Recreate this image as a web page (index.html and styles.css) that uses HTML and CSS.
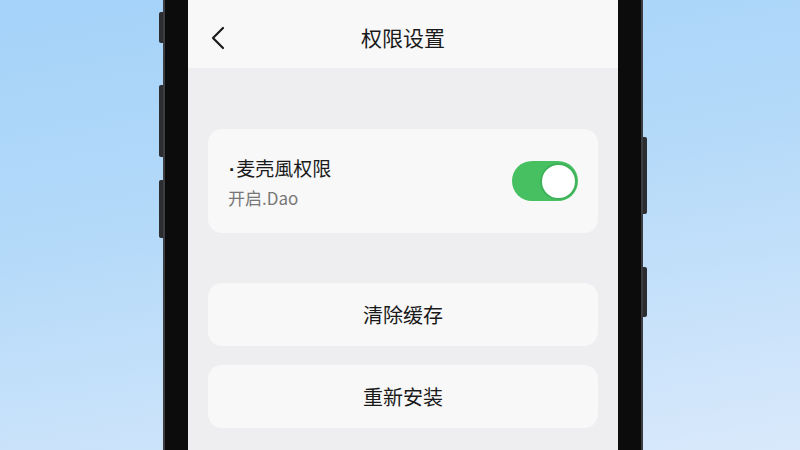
FILE: index.html
```html
<!DOCTYPE html>
<html lang="zh">
<head>
<meta charset="utf-8">
<title>权限设置</title>
<link rel="stylesheet" href="styles.css">
</head>
<body>
<div class="stage">
  <div class="keys keys-left">
    <span class="key key-a"></span>
    <span class="key key-b"></span>
    <span class="key key-c"></span>
  </div>
  <div class="phone">
    <div class="screen">
      <header class="header">
        <span class="back">
          <svg width="14" height="24" viewBox="0 0 14 24"><path d="M12 2 L2 12 L12 22" fill="none" stroke="#1a1a1a" stroke-width="2.2" stroke-linecap="round" stroke-linejoin="round"/></svg>
        </span>
        <h1 class="title">权限设置</h1>
        <span></span>
      </header>
      <main class="content">
        <section class="card card-perm">
          <div class="perm-text">
            <div class="perm-title"><span class="dot">·</span>麦壳風权限</div>
            <div class="perm-sub">开启.Dao</div>
          </div>
          <div class="toggle"><span class="knob"></span></div>
        </section>
        <section class="card card-action card-clear">清除缓存</section>
        <section class="card card-action">重新安装</section>
      </main>
    </div>
  </div>
  <div class="keys keys-right">
    <span class="key key-d"></span>
    <span class="key key-e"></span>
  </div>
</div>
</body>
</html>
```
FILE: styles.css
```css
* { box-sizing: border-box; }
html, body { margin: 0; padding: 0; }
body {
  width: 800px;
  height: 450px;
  overflow: hidden;
  font-family: "Noto Sans CJK SC", "Noto Sans", sans-serif;
}
.stage {
  display: flex;
  height: 450px;
  padding-left: 159px;
  background: linear-gradient(170deg, #a4d2f9 0%, #b5daf9 45%, #d9e9fb 100%);
}
.keys {
  width: 4px;
  display: flex;
  flex-direction: column;
}
.key {
  display: block;
  width: 4px;
  background: #2b2d30;
}
.keys-left .key { border-radius: 2px 0 0 2px; }
.keys-right .key { border-radius: 0 2px 2px 0; }
.key-a { margin-top: 12px; height: 31px; }
.key-b { margin-top: 42px; height: 72px; }
.key-c { margin-top: 23px; height: 58px; }
.key-d { margin-top: 137px; height: 77px; }
.key-e { margin-top: 53px; height: 50px; }
.phone {
  width: 480px;
  height: 450px;
  background: #0c0c0d;
  border-left: 2px solid #3b3d40;
  border-right: 2px solid #3b3d40;
  padding: 0 23px;
  display: flex;
}
.screen {
  flex: 1;
  background: #eeeef0;
  display: flex;
  flex-direction: column;
}
.header {
  height: 68px;
  background: #f8f8f8;
  display: grid;
  grid-template-columns: 1fr auto 1fr;
  align-items: center;
}
.back { display: flex; align-items: center; height: 24px; padding-left: 23px; margin-top: 8px; }
.title {
  margin: 0;
  font-size: 21px;
  font-weight: 400;
  color: #1a1a1a;
  line-height: 1;
  padding-top: 6px;
}
.content {
  display: flex;
  flex-direction: column;
  padding: 61px 20px 0;
}
.card {
  background: #f8f8f8;
  border-radius: 14px;
}
.card-perm {
  height: 104px;
  display: flex;
  align-items: center;
  justify-content: space-between;
  padding: 0 20px 0 20px;
}
.perm-text { display: flex; flex-direction: column; padding-top: 3px; }
.perm-title {
  font-size: 19px;
  color: #1a1a1a;
  line-height: 28px;
}
.dot {
  font-family: "Liberation Sans", sans-serif;
  font-weight: 700;
  margin-left: 1px;
  margin-right: 1px;
}
.perm-sub {
  font-size: 17px;
  color: #777;
  line-height: 28px;
}
.toggle {
  width: 66px;
  height: 40px;
  border-radius: 20px;
  background: #47c062;
  display: flex;
  justify-content: flex-end;
  align-items: center;
}
.knob {
  width: 37px;
  height: 37px;
  border-radius: 50%;
  background: #fff;
  border: 2px solid #3fb259;
  margin-right: 1px;
}
.card-action {
  height: 63px;
  display: flex;
  align-items: center;
  justify-content: center;
  font-size: 20px;
  color: #1a1a1a;
}
.card-clear { margin-top: 50px; margin-bottom: 19px; }
```
